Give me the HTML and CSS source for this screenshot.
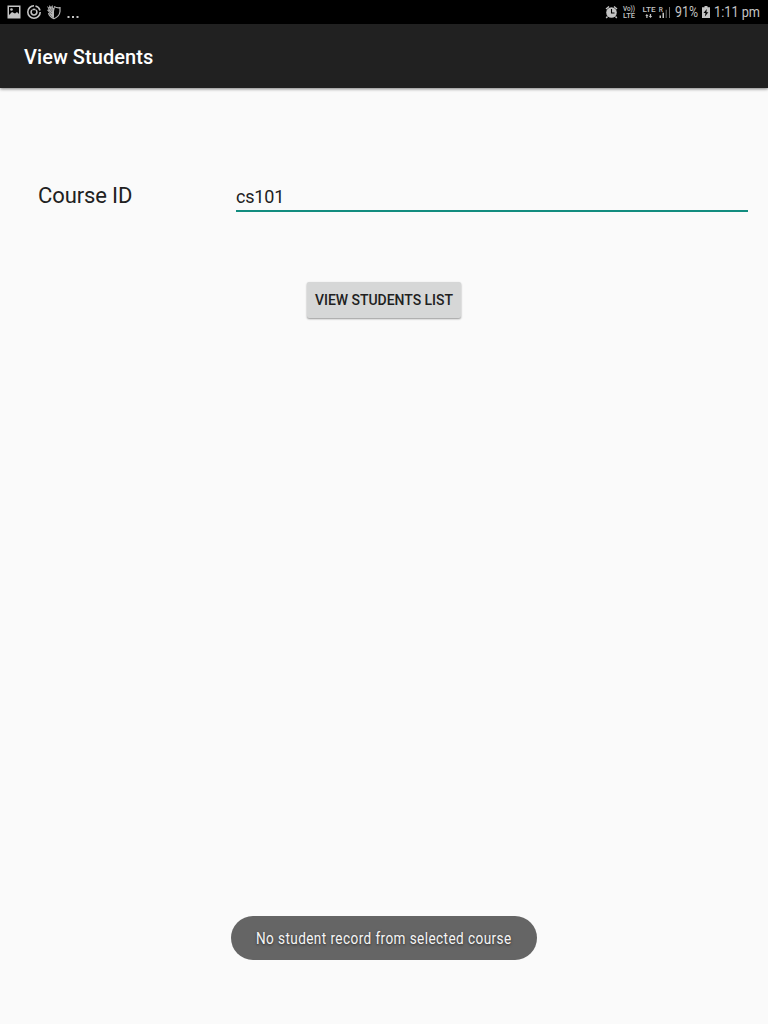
FILE: index.html
```html
<!DOCTYPE html>
<html lang="en">
<head>
<meta charset="utf-8">
<title>View Students</title>
<link rel="stylesheet" href="styles.css">
</head>
<body>
<div class="screen">
  <div class="status">
    <svg class="status-icons" width="90" height="24" viewBox="0 0 90 24">
      <path fill="#c4c4c4" fill-rule="evenodd" d="M7.500 5.500h13v13h-13zM9 7v8l3-3 3 1.500 2-1.500 2 2V7z"/>
      <circle cx="11.500" cy="9.500" r="1.300" fill="#c4c4c4"/>
      <g fill="none" stroke="#c4c4c4" stroke-width="1.600">
        <path d="M34 5.800A6.200 6.200 0 1 0 40.200 12M35.500 6A6.200 6.200 0 0 1 40 10.500"/>
        <path d="M32 10A2.900 2.900 0 1 0 36 10M32.500 9.700q1.500-.8 3 0"/>
      </g>
      <path fill="none" stroke="#b5b5b5" stroke-width="1.200" d="M54 6.500q3 1.700 6 1.200v3.800q-.5 5-6 7.200-4.500-1.800-5.500-5.700"/>
      <path fill="#b5b5b5" d="M47 6l2 1.500L49.500 5l1.500 2 1.500-2 .5 3 2-1-1 4v7q-4-2-5-5.500L47 10l1.500-.5z"/>
      <path stroke="#555" stroke-width=".7" d="M49 8l3 4M51.500 7.500l.8 3M48.500 11l3.500 3"/>
      <path fill="#c4c4c4" d="M67.500 16h2v2h-2zM72 16h2v2h-2zM76.500 16h2v2h-2z"/>
    </svg>
    <svg class="status-icons" width="168" height="24" viewBox="600 0 168 24">
      <circle cx="611.500" cy="12.500" r="5.300" fill="#c4c4c4"/>
      <path d="M606 9l3-2.500M617 9l-3-2.500M607.500 16.500l-1.300 1.500M615.500 16.500l1.300 1.500" stroke="#c4c4c4" stroke-width="1.400"/>
      <path d="M611.500 9v4h3" fill="none" stroke="#000" stroke-width="1.100"/>
      <g class="tiny">
        <text x="623" y="11.300" font-size="6.500" textLength="12" lengthAdjust="spacingAndGlyphs">Vo))</text>
        <text x="623" y="18" font-size="6.500" textLength="12" lengthAdjust="spacingAndGlyphs">LTE</text>
        <text x="642.500" y="12" font-size="8" textLength="13" lengthAdjust="spacingAndGlyphs">LTE</text>
        <text x="658.800" y="11.500" font-size="6.500">R</text>
      </g>
      <path fill="#c4c4c4" d="M646.800 14l1.700 2h-1v2h-1.200v-2h-1zM650.500 18l-1.800-2h1.100v-2h1.300v2h1.100zM659.500 15.500h1.500v2.500h-1.500zM662.500 12.800h1.500V18h-1.500z"/>
      <path fill="#707070" d="M665.700 9.800h1V18h-1zM669 7h1v11h-1z"/>
      <text class="status-text" x="675" y="17" textLength="23" lengthAdjust="spacingAndGlyphs">91%</text>
      <path fill="#c4c4c4" d="M704.500 6h3v1.300h2.500V18h-8V7.300h2.500z"/>
      <path d="M706.800 9l-3.300 4h2l-.6 3.500 3.500-4.300h-2z"/>
      <text class="status-text" x="714" y="17" textLength="46" lengthAdjust="spacingAndGlyphs">1:11 pm</text>
    </svg>
  </div>
  <header class="app-bar"><h1 class="title">View Students</h1></header>
  <main class="content">
    <div class="field">
      <label class="label" for="course">Course ID</label>
      <input class="input" id="course" value="cs101">
    </div>
    <button class="button">VIEW STUDENTS LIST</button>
    <div class="toast"><span class="toast-text">No student record from selected course</span></div>
  </main>
</div>
</body>
</html>
```
FILE: styles.css
```css
* { box-sizing: border-box; }
body { margin: 0; font-family: Roboto, sans-serif; color: #212121; }
.screen { width: 768px; height: 1024px; display: flex; flex-direction: column; background: #fafafa; overflow: hidden; }
.status { flex: none; height: 24px; display: flex; justify-content: space-between; background: #000; }
.status-icons { display: block; }
.tiny { fill: #c4c4c4; font-family: Roboto, sans-serif; font-weight: 500; }
.status-text { fill: #c4c4c4; font-size: 14.500px; }
.app-bar { flex: none; height: 64px; display: flex; align-items: center; padding: 2px 24px 0; background: #212121; box-shadow: 0 1px 3px rgba(0, 0, 0, .5); }
.title { margin: 0; color: #fff; font-size: 20px; line-height: 24px; font-weight: 500; letter-spacing: .06px; }
.content { flex: 1; display: flex; flex-direction: column; align-items: center; padding: 90px 20px 64px 38px; }
.field { width: 100%; height: 34px; display: flex; }
.label { width: 198px; padding-top: 4px; font-size: 22px; line-height: 28px; letter-spacing: -.12px; }
.input { flex: 1; min-width: 0; height: 34px; padding: 4px 0 0; border: 0; border-bottom: 2px solid #128c7f; background: transparent; color: #212121; font: 18px/24px Roboto, sans-serif; letter-spacing: -.2px; outline: 0; }
.button { width: 154px; height: 36px; margin: 70px 18px 0 0; padding: 0; border: 0; border-radius: 2px; background: #d6d7d7; color: #212121; font: 500 14px/36px Roboto, sans-serif; letter-spacing: -.03px; white-space: nowrap; box-shadow: 0 1px 2px rgba(0, 0, 0, .4); }
.toast { width: 306px; height: 44px; margin: auto 18px 0 0; padding-top: 2px; display: flex; align-items: center; justify-content: center; border-radius: 22px; background: #656565; }
.toast-text { color: #f5f5f5; font-size: 16px; line-height: 20px; letter-spacing: .5px; white-space: nowrap; transform: scaleX(.848); text-shadow: 0 1px 3px rgba(0, 0, 0, .6); }
```
